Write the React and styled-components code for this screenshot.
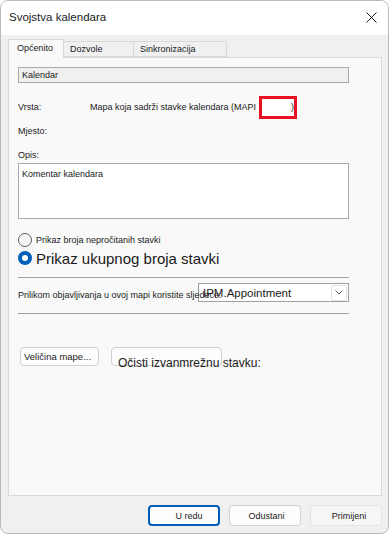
import React from "react";
import styled, { createGlobalStyle } from "styled-components";

const GlobalStyle = createGlobalStyle`
  html, body { margin: 0; padding: 0; background: #ffffff; }
  body { font-family: "Liberation Sans", Arial, sans-serif; color: #1a1a1a; }
  * { box-sizing: border-box; }
`;

const Window = styled.div`
  width: 389px;
  height: 534px;
  border: 1px solid #b9b9b9;
  border-radius: 8px;
  overflow: hidden;
  background: #f0f0f0;
  display: flex;
  flex-direction: column;
`;

const TitleBar = styled.div`
  height: 34px;
  flex: none;
  background: #ffffff;
  display: flex;
  align-items: center;
  justify-content: space-between;
  padding: 0 8px 2px 8px;
  font-size: 11.5px;
  color: #1a1a1a;
`;

const CloseButton = styled.div`
  width: 14px;
  height: 14px;
  display: flex;
  align-items: center;
  justify-content: center;
  margin-right: 2px;
`;

const Body = styled.div`
  flex: 1;
  display: flex;
  flex-direction: column;
  padding: 4px 7px 0 7px;
`;

const TabStrip = styled.div`
  display: flex;
  align-items: flex-end;
  height: 18px;
  position: relative;
  z-index: 1;
`;

const Tab = styled.div`
  width: ${(p) => p.$w}px;
  height: ${(p) => (p.$active ? 19 : 16)}px;
  margin-bottom: ${(p) => (p.$active ? -1 : 0)}px;
  margin-left: ${(p) => (p.$first ? 0 : -1)}px;
  padding: 0 0 0 ${(p) => (p.$active ? 8 : 6)}px;
  border: 1px solid #d9d9d9;
  border-bottom: ${(p) => (p.$active ? "none" : "1px solid #d9d9d9")};
  background: ${(p) => (p.$active ? "#f9f9f9" : "#f0f0f0")};
  font-size: 9px;
  line-height: ${(p) => (p.$active ? 17 : 14)}px;
  color: #1a1a1a;
`;

const Panel = styled.div`
  width: 374px;
  height: 439px;
  background: #f9f9f9;
  border: 1px solid #d9d9d9;
  padding: 9px 32px 0 9px;
  display: flex;
  flex-direction: column;
  font-size: 9px;
`;

const NameBox = styled.div`
  height: 16px;
  border: 1px solid #a9a9a9;
  background: #f0f0f0;
  padding-left: 3px;
  line-height: 14px;
  font-size: 9px;
`;

const InfoRow = styled.div`
  height: 24px;
  margin-top: ${(p) => p.$mt || 0}px;
  display: flex;
  align-items: center;
`;

const InfoLabel = styled.div`
  width: 72px;
  flex: none;
`;

const Redacted = styled.span`
  display: inline-block;
  width: 38px;
  height: 23px;
  margin-left: 3px;
  border: 3px solid #e81123;
  background: #ffffff;
  text-align: right;
  line-height: 17px;
  vertical-align: middle;
`;

const FieldLabel = styled.div`
  height: 12px;
  line-height: 12px;
  margin-top: 6px;
`;

const TextArea = styled.div`
  margin-top: 2px;
  height: 56px;
  border: 1px solid #a9a9a9;
  background: #ffffff;
  padding: 5px 3px;
  font-size: 9px;
`;

const RadioRow = styled.label`
  display: flex;
  align-items: center;
  gap: 4px;
  height: ${(p) => p.$h}px;
  margin-top: ${(p) => p.$mt}px;
  font-size: ${(p) => p.$fs}px;
`;

const RadioCircle = styled.span`
  width: 14px;
  height: 14px;
  flex: none;
  border-radius: 50%;
  border: ${(p) => (p.$checked ? "4.5px solid #005fb8" : "1px solid #5f5f5f")};
  background: ${(p) => (p.$checked ? "#ffffff" : "#f7f7f7")};
`;

const Divider = styled.div`
  height: 1px;
  background: #a0a0a0;
  margin-top: ${(p) => p.$mt}px;
`;

const PublishRow = styled.div`
  margin-top: 5px;
  display: grid;
  grid-template-areas: "cell";
  height: 19px;
`;

const PublishLabel = styled.div`
  grid-area: cell;
  align-self: end;
  margin-bottom: 1px;
  line-height: 12px;
  z-index: 1;
  white-space: nowrap;
`;

const Select = styled.div`
  grid-area: cell;
  justify-self: end;
  width: 151px;
  height: 19px;
  border: 1px solid #a0a0a0;
  background: #ffffff;
  display: flex;
  align-items: center;
  justify-content: space-between;
  padding: 0 0 0 4px;
  font-size: 11.5px;
`;

const ChevronBox = styled.div`
  width: 16px;
  height: 16px;
  margin-right: 1px;
  border: 1px solid #e3e3e3;
  border-radius: 2px;
  display: flex;
  align-items: center;
  justify-content: center;
`;

const ActionRow = styled.div`
  margin-top: 33px;
  display: flex;
  gap: 12px;
  padding-left: 2px;
`;

const PanelButton = styled.div`
  width: ${(p) => p.$w}px;
  height: 19px;
  border: 1px solid #d0d0d0;
  border-radius: 4px;
  background: #fdfdfd;
  font-size: ${(p) => p.$fs}px;
  padding: ${(p) => p.$pt}px 0 0 ${(p) => p.$pl}px;
  line-height: ${(p) => p.$lh}px;
  white-space: nowrap;
  overflow: visible;
`;

const Footer = styled.div`
  margin-top: 9px;
  display: flex;
  justify-content: flex-end;
  gap: 9px;
  margin-right: -1px;
`;

const FooterButton = styled.div`
  width: 72px;
  height: 21px;
  border-radius: 4px;
  border: ${(p) => (p.$primary ? "2px solid #005fb8" : p.$muted ? "1px solid #e3e3e3" : "1px solid #d0d0d0")};
  background: ${(p) => (p.$muted ? "#f6f6f6" : "#fdfdfd")};
  display: flex;
  align-items: center;
  justify-content: center;
  font-size: 9px;
  padding-left: ${(p) => p.$pl || 0}px;
  color: #1a1a1a;
`;

export default function App() {
  return (
    <>
      <GlobalStyle />
      <Window>
        <TitleBar>
          <span>Svojstva kalendara</span>
          <CloseButton>
            <svg width="11" height="11" viewBox="0 0 11 11">
              <path d="M0.5 0.5 L10.5 10.5 M10.5 0.5 L0.5 10.5" stroke="#1a1a1a" strokeWidth="1" fill="none" />
            </svg>
          </CloseButton>
        </TitleBar>
        <Body>
          <TabStrip>
            <Tab $w={56} $active $first>Općenito</Tab>
            <Tab $w={71}>Dozvole</Tab>
            <Tab $w={94}>Sinkronizacija</Tab>
          </TabStrip>
          <Panel>
            <NameBox>Kalendar</NameBox>
            <InfoRow $mt={12}>
              <InfoLabel>Vrsta:</InfoLabel>
              <span>
                Mapa koja sadrži stavke kalendara (MAPI
                <Redacted>)</Redacted>
              </span>
            </InfoRow>
            <InfoRow>
              <InfoLabel>Mjesto:</InfoLabel>
            </InfoRow>
            <FieldLabel>Opis:</FieldLabel>
            <TextArea>Komentar kalendara</TextArea>
            <RadioRow $h={16} $mt={13} $fs={9}>
              <RadioCircle />
              Prikaz broja nepročitanih stavki
            </RadioRow>
            <RadioRow $h={20} $mt={0} $fs={15}>
              <RadioCircle $checked />
              Prikaz ukupnog broja stavki
            </RadioRow>
            <Divider $mt={9} />
            <PublishRow>
              <PublishLabel>Prilikom objavljivanja u ovoj mapi koristite sljedeće:</PublishLabel>
              <Select>
                <span>IPM.Appointment</span>
                <ChevronBox>
                  <svg width="8" height="5" viewBox="0 0 8 5">
                    <path d="M0.5 0.5 L4 4 L7.5 0.5" stroke="#5a5a5a" strokeWidth="1" fill="none" />
                  </svg>
                </ChevronBox>
              </Select>
            </PublishRow>
            <Divider $mt={11} />
            <ActionRow>
              <PanelButton $w={79} $fs={9.5} $pl={3} $pt={0} $lh={17}>Veličina mape...</PanelButton>
              <PanelButton $w={111} $fs={12} $pl={6} $pt={8} $lh={14}>Očisti izvanmrežnu stavku:</PanelButton>
            </ActionRow>
          </Panel>
          <Footer>
            <FooterButton $primary $pl={10}>U redu</FooterButton>
            <FooterButton $pl={3}>Odustani</FooterButton>
            <FooterButton $muted $pl={6}>Primijeni</FooterButton>
          </Footer>
        </Body>
      </Window>
    </>
  );
}
